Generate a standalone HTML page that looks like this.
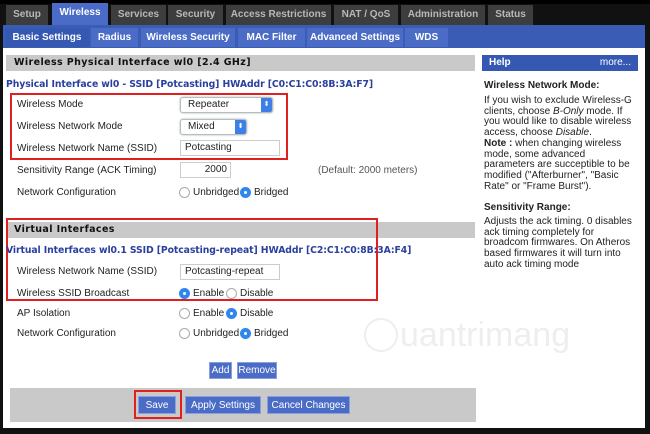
<!DOCTYPE html>
<html><head><style>
*{margin:0;padding:0;box-sizing:border-box}
body{width:650px;height:434px;background:#111;position:relative;overflow:hidden;font-family:"Liberation Sans",sans-serif;font-size:10px;color:#222}
.a{position:absolute;white-space:nowrap}
.tab{position:absolute;top:5px;height:20px;background:#3d3d3d;color:#b8b8b8;font-weight:bold;font-size:10px;line-height:20px;text-align:center}
.st{position:absolute;top:28px;height:19px;background:#4a6cc6;color:#fff;font-weight:bold;font-size:10px;line-height:19px;text-align:center}
.hd{position:absolute;background:#c9c9c9;height:16px;font-family:"DejaVu Sans",sans-serif;font-weight:bold;font-size:9.5px;line-height:16px;padding-left:8px;letter-spacing:0.4px;color:#111}
.lb{position:absolute;left:17px;font-size:10px}
.in{position:absolute;background:#fff;border:1px solid #ccc;font-size:10px;line-height:14px;padding-left:4px}
.sel{position:absolute;background:#fff;border:1px solid #bbb;border-radius:3px;box-shadow:0 0 2px #9bb;font-size:10px;line-height:14px;padding-left:7px}
.sel i{position:absolute;right:0;top:0;bottom:0;width:11px;background:#3d7fe6;border-radius:0 2px 2px 0;color:#fff;font-style:normal;font-size:7px;text-align:center;line-height:14px}
.r{position:absolute;width:11px;height:11px;border-radius:50%;border:1px solid #aaa;background:#fff}
.r.on{background:#2f86ef;border-color:#2f86ef}
.r.on:after{content:"";position:absolute;left:3px;top:3px;width:3px;height:3px;border-radius:50%;background:#fff}
.btn{position:absolute;background:#4a6cc6;color:#fff;font-size:10px;text-align:center;line-height:18px;height:18px;border:1px solid #8aa0d8}
.red{position:absolute;border:2px solid #e0201e}
.blue{color:#2a3f9e;font-family:"DejaVu Sans",sans-serif;font-weight:bold;font-size:9.3px;letter-spacing:-0.1px}
.help{position:absolute;left:484px;font-size:10px;line-height:10.7px;white-space:normal;width:150px}
</style></head><body>
<div class="a" style="left:0;top:0;width:650px;height:4px;background:#000"></div>
<div class="tab" style="left:6px;width:42px">Setup</div>
<div class="tab" style="left:52px;width:56px;background:#4a6cc6;color:#fff;top:3px;height:22px">Wireless</div>
<div class="tab" style="left:111px;width:55px">Services</div>
<div class="tab" style="left:168px;width:55px">Security</div>
<div class="tab" style="left:226px;width:105px">Access Restrictions</div>
<div class="tab" style="left:334px;width:64px">NAT / QoS</div>
<div class="tab" style="left:401px;width:84px">Administration</div>
<div class="tab" style="left:488px;width:45px">Status</div>
<div class="a" style="left:3px;top:25px;width:642px;height:23px;background:#3b5cb4"></div>
<div class="st" style="left:5px;width:84px;background:#3559b3">Basic Settings</div>
<div class="st" style="left:91px;width:47px">Radius</div>
<div class="st" style="left:141px;width:94px">Wireless Security</div>
<div class="st" style="left:238px;width:67px">MAC Filter</div>
<div class="st" style="left:307px;width:96px">Advanced Settings</div>
<div class="st" style="left:405px;width:43px">WDS</div>
<div class="a" style="left:3px;top:48px;width:642px;height:380px;background:#fff"></div>

<div class="hd" style="left:6px;top:55px;width:469px">Wireless Physical Interface wl0 [2.4 GHz]</div>
<div class="a" style="left:482px;top:55px;width:156px;height:16px;background:#3559b3;color:#fff;font-weight:bold;line-height:16px;padding:0 7px">Help<span style="float:right;font-weight:normal">more...</span></div>

<div class="a blue" style="left:6px;top:79px">Physical Interface wl0 - SSID [Potcasting] HWAddr [C0:C1:C0:8B:3A:F7]</div>
<div class="red" style="left:10px;top:93px;width:278px;height:67px"></div>
<div class="lb" style="top:99px">Wireless Mode</div>
<div class="sel" style="left:180px;top:97px;width:93px;height:16px">Repeater<i>⬍</i></div>
<div class="lb" style="top:121px">Wireless Network Mode</div>
<div class="sel" style="left:180px;top:119px;width:67px;height:16px">Mixed<i>⬍</i></div>
<div class="lb" style="top:143px">Wireless Network Name (SSID)</div>
<div class="in" style="left:180px;top:140px;width:100px;height:16px">Potcasting</div>
<div class="lb" style="top:165px">Sensitivity Range (ACK Timing)</div>
<div class="in" style="left:180px;top:162px;width:51px;height:16px;text-align:right;padding-right:3px">2000</div>
<div class="a" style="left:318px;top:165px;color:#555">(Default: 2000 meters)</div>
<div class="lb" style="top:187px">Network Configuration</div>
<div class="r" style="left:179px;top:187px"></div><div class="a" style="left:193px;top:187px">Unbridged</div>
<div class="r on" style="left:240px;top:187px"></div><div class="a" style="left:254px;top:187px">Bridged</div>

<div class="hd" style="left:6px;top:222px;width:469px">Virtual Interfaces</div>
<div class="red" style="left:6px;top:218px;width:372px;height:83px"></div>
<div class="a blue" style="left:6px;top:245px">Virtual Interfaces wl0.1 SSID [Potcasting-repeat] HWAddr [C2:C1:C0:8B:3A:F4]</div>
<div class="lb" style="top:266px">Wireless Network Name (SSID)</div>
<div class="in" style="left:180px;top:264px;width:100px;height:16px">Potcasting-repeat</div>
<div class="lb" style="top:288px">Wireless SSID Broadcast</div>
<div class="r on" style="left:179px;top:288px"></div><div class="a" style="left:193px;top:288px">Enable</div>
<div class="r" style="left:226px;top:288px"></div><div class="a" style="left:240px;top:288px">Disable</div>
<div class="lb" style="top:308px">AP Isolation</div>
<div class="r" style="left:179px;top:308px"></div><div class="a" style="left:193px;top:308px">Enable</div>
<div class="r on" style="left:226px;top:308px"></div><div class="a" style="left:240px;top:308px">Disable</div>
<div class="lb" style="top:328px">Network Configuration</div>
<div class="r" style="left:179px;top:328px"></div><div class="a" style="left:193px;top:328px">Unbridged</div>
<div class="r on" style="left:240px;top:328px"></div><div class="a" style="left:254px;top:328px">Bridged</div>

<div class="a" style="left:364px;top:318px;width:34px;height:34px;border:2px solid #eee;border-radius:50%"></div>
<div class="a" style="left:400px;top:316px;font-size:34px;color:#eeeeee">uantrimang</div>

<div class="btn" style="left:209px;top:362px;width:23px;height:17px;line-height:16px">Add</div>
<div class="btn" style="left:237px;top:362px;width:40px;height:17px;line-height:16px">Remove</div>

<div class="a" style="left:10px;top:388px;width:466px;height:34px;background:#c9c9c9"></div>
<div class="red" style="left:134px;top:390px;width:48px;height:29px"></div>
<div class="btn" style="left:138px;top:396px;width:38px">Save</div>
<div class="btn" style="left:185px;top:396px;width:76px">Apply Settings</div>
<div class="btn" style="left:267px;top:396px;width:83px">Cancel Changes</div>

<div class="help" style="top:81px"><b>Wireless Network Mode:</b></div>
<div class="help" style="top:96px">If you wish to exclude Wireless-G clients, choose <i>B-Only</i> mode. If you would like to disable wireless access, choose <i>Disable</i>.<br><b>Note :</b> when changing wireless mode, some advanced parameters are succeptible to be modified ("Afterburner", "Basic Rate" or "Frame Burst").</div>
<div class="help" style="top:203px"><b>Sensitivity Range:</b></div>
<div class="help" style="top:217px">Adjusts the ack timing. 0 disables ack timing completely for broadcom firmwares. On Atheros based firmwares it will turn into auto ack timing mode</div>
</body></html>
